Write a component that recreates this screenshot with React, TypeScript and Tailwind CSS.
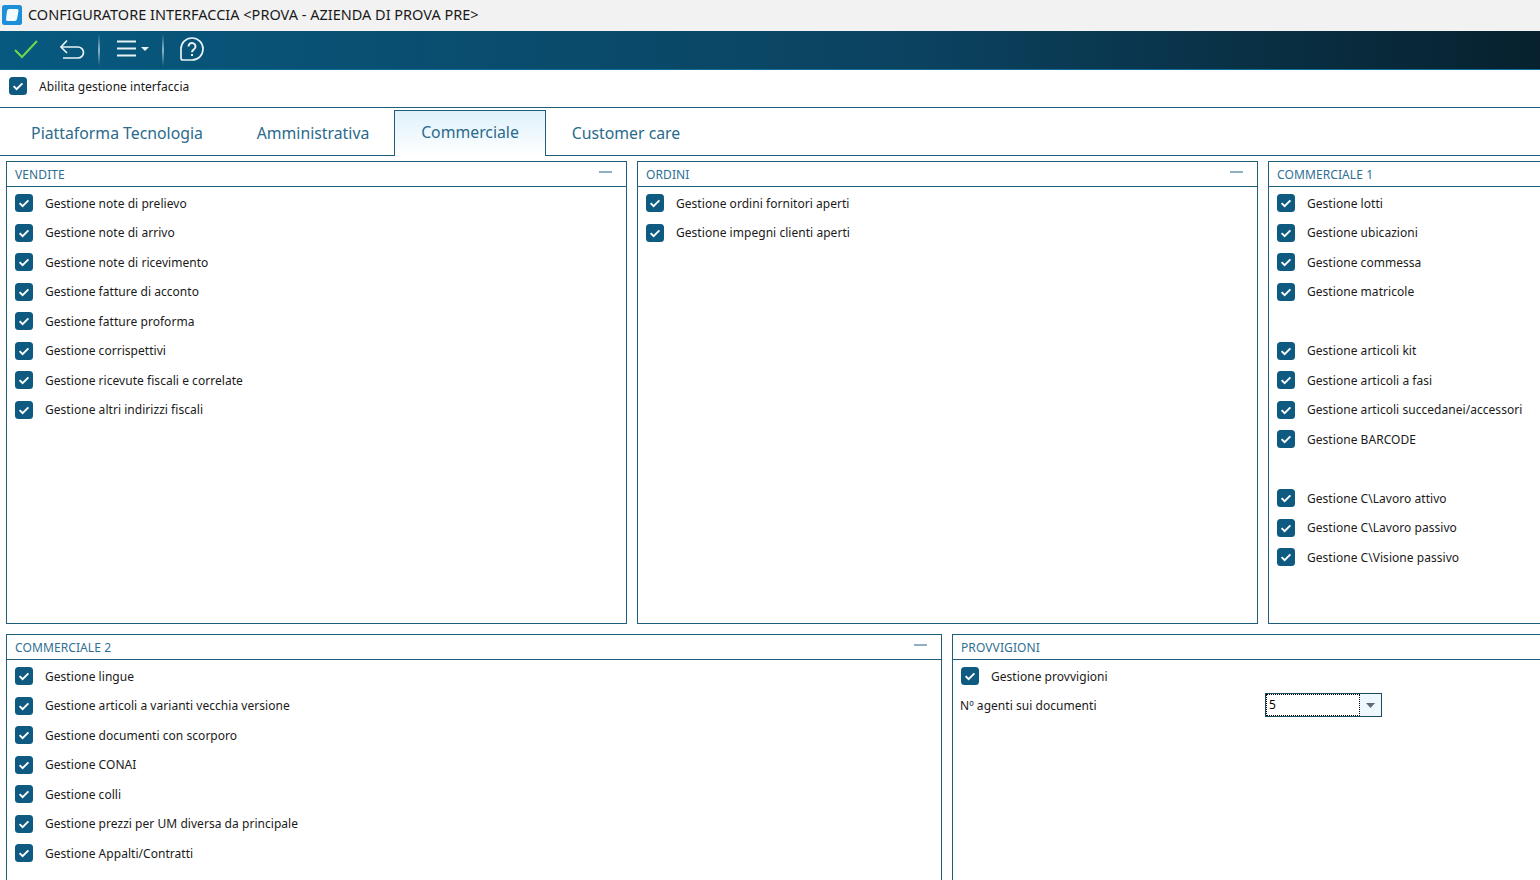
import React from "react";

const FONT = "font-['Noto_Sans','DejaVu_Sans',sans-serif]";

function Check({ label, className = "" }: { label?: string; className?: string }) {
  return (
    <div className={"flex h-[29.5px] items-center " + className}>
      <svg width="18" height="18" viewBox="0 0 18 18" className="mb-[1px] shrink-0">
        <rect x="0" y="0" width="18" height="18" rx="3.5" fill="#0f5a80" />
        <path d="M4.6 9.2 L7.6 12.2 L13.4 6.4" fill="none" stroke="#fff" strokeWidth="1.9" />
      </svg>
      <span className="ml-[12px] text-[12px] leading-none tracking-[0.04px] text-[#1a1a1a]">{label}</span>
    </div>
  );
}

function Panel({ title, width, rows, collapse = true, children, tall }: { title: string; width: string; rows?: (string | null)[]; collapse?: boolean; children?: React.ReactNode; tall: string }) {
  return (
    <section className={"shrink-0 border border-[#1f5f7c] bg-white " + width + " " + tall}>
      <header className="flex h-[25px] items-center justify-between border-b border-[#1f5f7c] pl-[8px] pr-[14px]">
        <span className="pt-[2px] text-[12px] leading-none tracking-[0.1px] text-[#2f6f93]">{title}</span>
        {collapse && <span className="mb-[5px] h-[2px] w-[13px] bg-[#8fb0c0]" />}
      </header>
      <div className="pl-[8px] pt-[2px]">
        {rows?.map((r, i) => (r === null ? <div key={i} className="h-[29.5px]" /> : <Check key={i} label={r} />))}
        {children}
      </div>
    </section>
  );
}

const vendite = ["Gestione note di prelievo", "Gestione note di arrivo", "Gestione note di ricevimento", "Gestione fatture di acconto", "Gestione fatture proforma", "Gestione corrispettivi", "Gestione ricevute fiscali e correlate", "Gestione altri indirizzi fiscali"];
const ordini = ["Gestione ordini fornitori aperti", "Gestione impegni clienti aperti"];
const comm1 = ["Gestione lotti", "Gestione ubicazioni", "Gestione commessa", "Gestione matricole", null, "Gestione articoli kit", "Gestione articoli a fasi", "Gestione articoli succedanei/accessori", "Gestione BARCODE", null, "Gestione C\\Lavoro attivo", "Gestione C\\Lavoro passivo", "Gestione C\\Visione passivo"];
const comm2 = ["Gestione lingue", "Gestione articoli a varianti vecchia versione", "Gestione documenti con scorporo", "Gestione CONAI", "Gestione colli", "Gestione prezzi per UM diversa da principale", "Gestione Appalti/Contratti"];

const Sep = ({ className }: { className: string }) => (
  <span className={"h-[32px] w-[2px] bg-gradient-to-b from-transparent via-[#8db4c6] to-transparent " + className} />
);

export default function App() {
  return (
    <div className={"flex h-[880px] w-[1540px] flex-col overflow-hidden bg-white " + FONT}>
      <div className="flex h-[31px] shrink-0 items-center bg-[#f2f2f2] pl-[2px]">
        <svg width="20" height="20" viewBox="0 0 20 20" className="mb-[2px] shrink-0">
          <rect x="0" y="0" width="20" height="20" rx="2.5" fill="#1b8fd8" />
          <path d="M7 4 H15 a1.5 1.5 0 0 1 1.5 1.7 L15 14 a2.5 2.5 0 0 1 -2.4 2 H5.5 a1.5 1.5 0 0 1 -1.5 -1.7 L5 6 A2.4 2.4 0 0 1 7 4 Z" fill="#f4fbff" />
        </svg>
        <span className="mb-[2px] ml-[6px] text-[14.5px] leading-none text-[#1a1a1a]">CONFIGURATORE INTERFACCIA &lt;PROVA - AZIENDA DI PROVA PRE&gt;</span>
      </div>

      <div className="flex h-[39px] shrink-0 items-center border-b border-[#0f6f97] bg-gradient-to-r from-[#07597f] via-[#0b4260] via-60% to-[#07212e]">
        <svg width="26" height="22" viewBox="0 0 26 22" className="mb-[2px] ml-[13px]">
          <path d="M2 12 L9 19 L24 3" fill="none" stroke="#6fd84a" strokeWidth="2" />
        </svg>
        <svg width="26" height="24" viewBox="0 0 26 24" className="mb-[1px] ml-[20px]" fill="none" stroke="#e8f2f6" strokeWidth="1.7">
          <path d="M8 2.5 L2 9 L8 15" />
          <path d="M2 9 H19 a5.5 5.5 0 0 1 0 11 H4" />
        </svg>
        <Sep className="ml-[13px]" />
        <svg width="34" height="18" viewBox="0 0 34 18" className="mb-[2px] ml-[17px]" fill="none">
          <path d="M0 1.5 H19 M0 8.5 H19 M0 15.5 H19" stroke="#e8f2f6" strokeWidth="1.8" />
          <path d="M24 7 H32 L28 11 Z" fill="#e8f2f6" />
        </svg>
        <Sep className="ml-[11px]" />
        <svg width="26" height="26" viewBox="0 0 26 26" className="mb-[2px] ml-[15px]" fill="none" stroke="#e8f2f6" strokeWidth="1.7">
          <path d="M13 2 a11 11 0 0 1 0 22 H4 a2 2 0 0 1 -2 -2 V13 A11 11 0 0 1 13 2 Z" />
          <path d="M9.5 10.5 a3.5 3.5 0 1 1 5.5 2.8 c-1.4 1 -2 1.4 -2 3" strokeWidth="2" />
          <path d="M13 18 V20" strokeWidth="2" />
        </svg>
      </div>

      <div className="flex h-[38px] shrink-0 items-center border-b border-[#1f5f7c] pb-[4px] pl-[9px]">
        <Check label="Abilita gestione interfaccia" />
      </div>

      <nav className="flex h-[48px] shrink-0 items-end border-b border-[#1f5f7c] text-[15.8px] leading-none text-[#2a6a8c]">
        <div className="flex h-[47px] w-[232px] items-center justify-center pl-[2px] pt-[5px]">Piattaforma Tecnologia</div>
        <div className="flex h-[47px] w-[162px] items-center justify-center pt-[5px]">Amministrativa</div>
        <div className="relative top-[1px] flex h-[46px] w-[152px] items-center justify-center border border-b-0 border-[#1f5f7c] bg-gradient-to-b from-[#dff1fb] to-white pb-[2px]">Commerciale</div>
        <div className="flex h-[47px] w-[160px] items-center justify-center pt-[5px]">Customer care</div>
      </nav>

      <div className="flex shrink-0 gap-[10px] pl-[6px] pt-[5px]">
        <Panel title="VENDITE" width="w-[621px]" tall="h-[463px]" rows={vendite} />
        <Panel title="ORDINI" width="w-[621px]" tall="h-[463px]" rows={ordini} />
        <Panel title="COMMERCIALE 1" width="w-[621px]" tall="h-[463px]" rows={comm1} />
      </div>

      <div className="flex shrink-0 gap-[10px] pl-[6px] pt-[10px]">
        <Panel title="COMMERCIALE 2" width="w-[936px]" tall="h-[300px]" rows={comm2} />
        <Panel title="PROVVIGIONI" width="w-[936px]" tall="h-[300px]" rows={["Gestione provvigioni"]}>
          <div className="-ml-[1px] flex h-[29.5px] items-center">
            <span className="w-[305px] text-[12px] leading-none tracking-[0.04px] text-[#1a1a1a]">Nº agenti sui documenti</span>
            <div className="mb-[2px] flex h-[24px] w-[117px] border border-[#1c4a60] bg-white">
              <div className="flex flex-1 items-center border border-dotted border-black pl-[2px] text-[12px] leading-none text-black">5</div>
              <div className="flex w-[21px] items-center justify-center bg-[#eef7fd]">
                <svg width="9" height="5" viewBox="0 0 9 5"><path d="M0 0 H9 L4.5 5 Z" fill="#5a6a7a" /></svg>
              </div>
            </div>
          </div>
        </Panel>
      </div>
    </div>
  );
}
